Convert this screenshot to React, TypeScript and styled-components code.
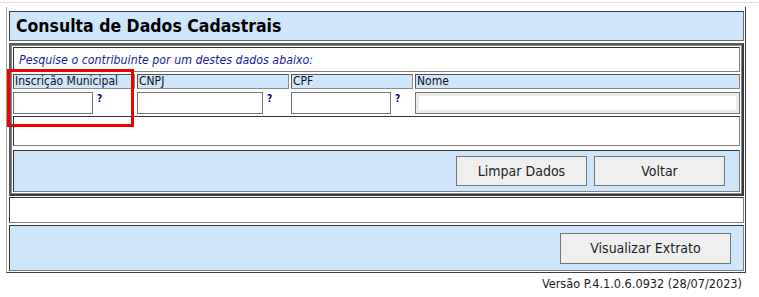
import React from "react";
import styled, { createGlobalStyle } from "styled-components";

const GlobalStyle = createGlobalStyle`
  body {
    margin: 0;
    background: #ffffff;
    font-family: "DejaVu Sans Condensed", "DejaVu Sans", Verdana, sans-serif;
    color: #000;
  }
`;

const BLUE = "#cfe5fb";

const Page = styled.div`
  position: relative;
  width: 759px;
  height: 297px;
  padding-top: 2px;
  box-sizing: border-box;
`;

const TopRule = styled.div`
  height: 1px;
  background: #dcdcdc;
`;

const Frame = styled.div`
  margin: 4px 0 0 6px;
  width: 740px;
  box-sizing: border-box;
  border-left: 1px solid #a0a0a0;
  border-right: 1px solid #3c3c3c;
  border-bottom: 1px solid #3c3c3c;
  padding: 4px 1px 1px 2px;
  display: flex;
  flex-direction: column;
`;

const TitleBox = styled.div`
  height: 30px;
  box-sizing: border-box;
  margin-bottom: 2px;
  background: ${BLUE};
  border: 1px solid;
  border-color: #3c3c3c #6a6a6a #6a6a6a #3c3c3c;
  padding-left: 6px;
  display: flex;
  align-items: center;
`;

const Title = styled.h1`
  margin: 0;
  font-size: 17.5px;
  font-weight: bold;
  color: #000;
`;

const SearchTable = styled.div`
  margin-bottom: 1px;
  border: 2px solid;
  border-color: #5a5a5a #3a3a3a #3a3a3a #5a5a5a;
`;

const SearchCell = styled.div`
  border: 1px solid #8a8a8a;
  padding: 1px;
  display: flex;
  flex-direction: column;
`;

const Box = styled.div<{ $h: number; $mb?: number }>`
  height: ${(p) => p.$h}px;
  margin-bottom: ${(p) => p.$mb ?? 0}px;
  box-sizing: border-box;
  border: 1px solid;
  border-color: #333333 #808080 #808080 #333333;
  background: #ffffff;
`;

const Instruction = styled(Box)`
  display: flex;
  align-items: center;
  padding-left: 5px;
  font-size: 12.3px;
  font-style: italic;
  color: #1c1ca0;
`;

const Bar = styled(Box)<{ $pr: number }>`
  background: ${BLUE};
  display: flex;
  justify-content: flex-end;
  align-items: center;
  gap: 7px;
  padding-right: ${(p) => p.$pr}px;
`;

const FieldGrid = styled.div`
  display: grid;
  grid-template-columns: 122px 152px 122px 1fr;
  grid-template-rows: 15px 22px;
  column-gap: 2px;
  row-gap: 3px;
  margin-bottom: 2px;
`;

const Label = styled.div`
  box-sizing: border-box;
  background: ${BLUE};
  border: 1px solid;
  border-color: #555555 #8a8a8a #8a8a8a #555555;
  font-size: 12px;
  line-height: 13px;
  padding-left: 1px;
  white-space: nowrap;
  overflow: hidden;
  color: #111;
`;

const InputCell = styled.div`
  display: flex;
  align-items: flex-start;
`;

const TextInput = styled.input<{ $w?: number; $disabled?: boolean }>`
  width: ${(p) => (p.$w ? `${p.$w}px` : "100%")};
  height: 22px;
  box-sizing: border-box;
  margin: 0;
  padding: 0 2px;
  border: 1px solid #767676;
  background: #ffffff;
  box-shadow: ${(p) => (p.$disabled ? "inset 0 0 0 3px #ebebeb" : "none")};
  font-family: inherit;
  font-size: 12px;
  outline: none;
`;

const Help = styled.span`
  margin: 2px 0 0 4px;
  font-size: 10px;
  font-weight: bold;
  color: #000080;
  line-height: 10px;
`;

const Button = styled.button<{ $w: number; $h: number }>`
  width: ${(p) => p.$w}px;
  height: ${(p) => p.$h}px;
  box-sizing: border-box;
  margin: 0;
  padding: 0;
  background: #efefef;
  border: 1px solid #767676;
  border-radius: 0;
  font-family: inherit;
  font-size: 14px;
  color: #222;
`;

const Version = styled.div`
  margin-top: 3px;
  padding-right: 17px;
  text-align: right;
  font-size: 12.6px;
  color: #222;
`;

const Highlight = styled.div`
  position: absolute;
  left: 7px;
  top: 69px;
  width: 127px;
  height: 58px;
  box-sizing: border-box;
  border: 3px solid #f00000;
  pointer-events: none;
`;

const App: React.FC = () => {
  return (
    <Page>
      <GlobalStyle />
      <TopRule />
      <Frame>
        <TitleBox>
          <Title>Consulta de Dados Cadastrais</Title>
        </TitleBox>
        <SearchTable>
          <SearchCell>
            <Instruction $h={25} $mb={2}>
              Pesquise o contribuinte por um destes dados abaixo:
            </Instruction>
            <FieldGrid>
              <Label>Inscrição Municipal</Label>
              <Label>CNPJ</Label>
              <Label>CPF</Label>
              <Label>Nome</Label>
              <InputCell>
                <TextInput $w={80} />
                <Help>?</Help>
              </InputCell>
              <InputCell>
                <TextInput $w={126} />
                <Help>?</Help>
              </InputCell>
              <InputCell>
                <TextInput $w={100} />
                <Help>?</Help>
              </InputCell>
              <InputCell>
                <TextInput $disabled />
              </InputCell>
            </FieldGrid>
            <Box $h={30} $mb={4} />
            <Bar $h={42} $pr={14}>
              <Button $w={131} $h={30}>Limpar Dados</Button>
              <Button $w={131} $h={30}>Voltar</Button>
            </Bar>
          </SearchCell>
        </SearchTable>
        <Box $h={26} $mb={2} />
        <Bar $h={46} $pr={12}>
          <Button $w={171} $h={31}>Visualizar Extrato</Button>
        </Bar>
      </Frame>
      <Version>Versão P.4.1.0.6.0932 (28/07/2023)</Version>
      <Highlight />
    </Page>
  );
};

export default App;
